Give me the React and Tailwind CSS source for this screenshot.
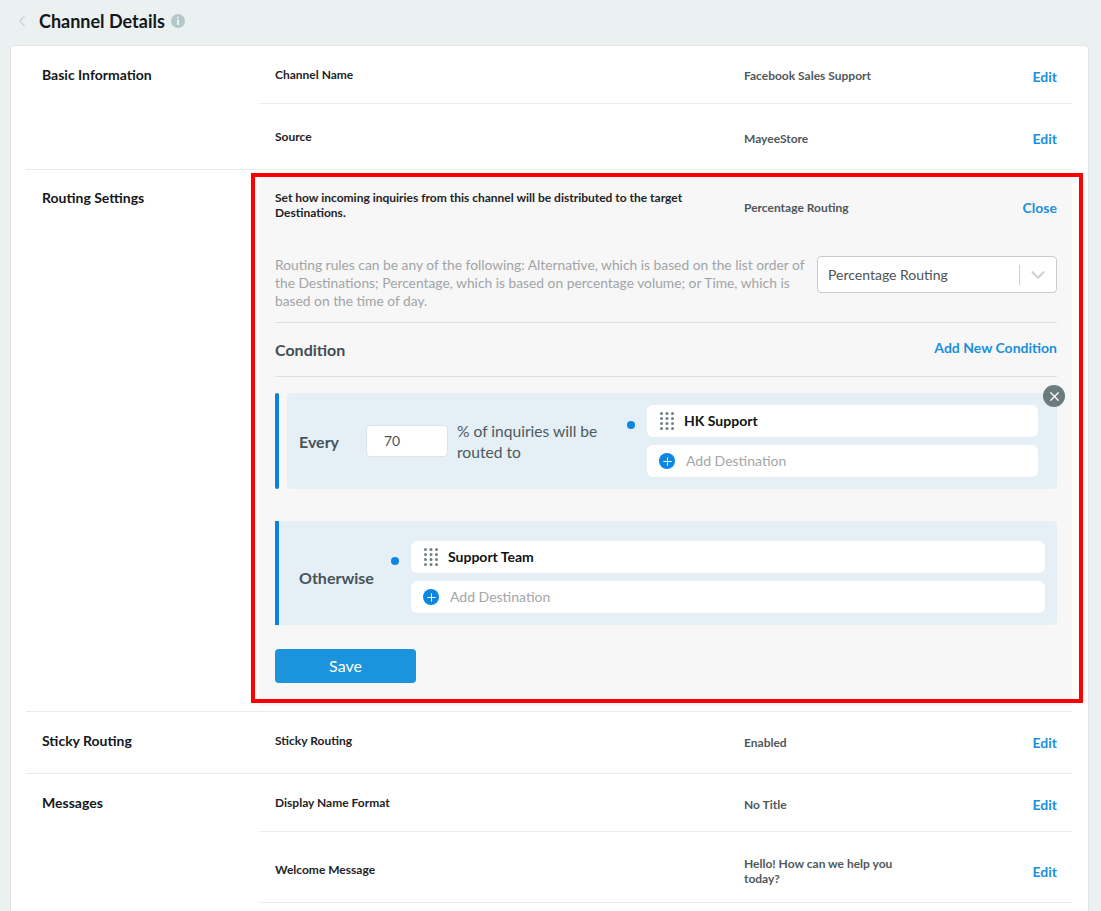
import { ChevronLeft, ChevronDown, X, Plus } from 'lucide-react';

const font = 'font-["Lato","Liberation_Sans",sans-serif]';

function Grip() {
  const dots = [];
  for (let y = 0; y < 4; y++) {
    for (let x = 0; x < 3; x++) {
      dots.push(<circle key={`${x}-${y}`} cx={1.5 + x * 5.5} cy={1.5 + y * 5} r="1.5" fill="#6f8085" />);
    }
  }
  return (
    <svg width="14" height="18" viewBox="0 0 14 18" className="shrink-0">
      {dots}
    </svg>
  );
}

function InfoBadge() {
  return (
    <svg width="14" height="14" viewBox="0 0 14 14" className="ml-[6px] shrink-0">
      <circle cx="7" cy="7" r="7" fill="#b4c7c9" />
      <rect x="6" y="2.6" width="2" height="2" rx="1" fill="#eef3f3" />
      <rect x="6" y="5.6" width="2" height="5.4" fill="#eef3f3" />
    </svg>
  );
}

function Row({ label, value, className = '', valueClass = 'pt-[2px]' }) {
  return (
    <div className={`flex pl-4 pr-[15px] ${className}`}>
      <div className="w-[469px] shrink-0 text-xs font-bold leading-4 text-[#1f2326]">{label}</div>
      <div className={`w-[170px] shrink-0 text-xs font-bold leading-[15px] text-[#50585c] ${valueClass}`}>{value}</div>
      <div className="ml-auto text-sm font-bold leading-5 text-[#1a8fdd]">Edit</div>
    </div>
  );
}

function Section({ title, children, last, titleClass = 'pt-[19px]' }) {
  return (
    <div className={`flex ${last ? '' : 'border-b border-[#e9ecec]'}`}>
      <div className={`w-[233px] shrink-0 pl-4 text-sm font-bold leading-5 text-[#14181a] ${titleClass}`}>{title}</div>
      <div className="min-w-0 flex-1">{children}</div>
    </div>
  );
}

function Destination({ name, className = '' }) {
  return (
    <div className={`flex flex-1 flex-col gap-2 ${className}`}>
      <div className="flex h-8 items-center gap-[10px] rounded-md bg-white pl-[13px]">
        <Grip />
        <span className="text-sm font-bold text-[#101314]">{name}</span>
      </div>
      <div className="flex h-8 items-center gap-[11px] rounded-md bg-white pl-3">
        <span className="flex h-4 w-4 items-center justify-center rounded-full bg-[#0b87e3]">
          <Plus size={13} strokeWidth={1.8} className="text-white" />
        </span>
        <span className="text-sm text-[#a3a6a8]">Add Destination</span>
      </div>
    </div>
  );
}

function RoutingPanel() {
  return (
    <div className="relative mt-[7px] mb-[5px] bg-[#f7f7f7] pl-4 pr-[15px] pt-[13px] pb-[23px]">
      {/* red highlight round the panel */}
      <div className="pointer-events-none absolute -left-2 -right-[11px] -top-1 bottom-[3px] border-4 border-[#ff0000]" />

      <div className="flex">
        <div className="w-[420px] shrink-0 text-xs font-bold leading-[15px] text-[#1f2326]">
          Set how incoming inquiries from this channel will be distributed to the target Destinations.
        </div>
        <div className="ml-[49px] pt-[10px] text-xs font-bold leading-4 text-[#50585c]">Percentage Routing</div>
        <div className="ml-auto pt-[8px] text-sm font-bold leading-5 text-[#1a8fdd]">Close</div>
      </div>

      <div className="mt-9 flex border-b border-[#dfe1e1] pb-3">
        <p className="w-[534px] shrink-0 text-[13.8px] leading-[18px] text-[#a1a4a6]">
          Routing rules can be any of the following: Alternative, which is based on the list order of the Destinations; Percentage, which is based on percentage volume; or Time, which is based on the time of day.
        </p>
        <div className="ml-auto flex h-[37px] w-[240px] items-center rounded border border-[#c9cbcb] bg-white pl-[10px] text-sm text-[#4c5357]">
          <span className="flex-1">Percentage Routing</span>
          <span className="h-5 w-px bg-[#cfd1d1]" />
          <ChevronDown size={22} strokeWidth={2.4} className="mx-[7px] text-[#d0d2d2]" />
        </div>
      </div>

      <div className="flex h-[54px] items-center justify-between border-b border-[#dfe1e1]">
        <span className="text-base font-bold text-[#444d52]">Condition</span>
        <span className="-mt-[4px] text-sm font-bold text-[#1a8fdd]">Add New Condition</span>
      </div>

      <div className="relative mt-4 flex h-24 gap-2">
        <div className="w-1 shrink-0 rounded-sm bg-[#0b82dc]" />
        <div className="flex flex-1 items-center rounded bg-[#e4eff6] pl-3 pr-[19px]">
          <span className="w-[67px] shrink-0 pt-[2px] text-base font-bold text-[#48545a]">Every</span>
          <div className="flex h-8 w-[82px] shrink-0 items-center rounded border border-[#dfe3e5] bg-white pl-[17px] text-sm text-[#4c5357]">70</div>
          <div className="ml-[9px] w-[165px] shrink-0 pt-[2px] text-[15.6px] leading-[21px] text-[#4c5a60]">
            % of inquiries will be routed to
          </div>
          <span className="mt-[28px] mr-3 ml-[5px] h-2 w-2 shrink-0 self-start rounded-full bg-[#0b87e3]" />
          <Destination name="HK Support" />
        </div>
        <span className="absolute -right-2 -top-2 flex h-[22px] w-[22px] items-center justify-center rounded-full bg-[#6b7b7e]">
          <X size={15} strokeWidth={2} className="text-white" />
        </span>
      </div>

      <div className="mt-8 flex h-[104px] items-center rounded-r border-l-4 border-[#0b82dc] bg-[#e4eff6] pl-5 pr-3">
        <span className="mt-[10px] w-[92px] shrink-0 text-base font-bold text-[#48545a]">Otherwise</span>
        <span className="mt-9 mr-3 h-2 w-2 shrink-0 self-start rounded-full bg-[#0b87e3]" />
        <Destination name="Support Team" className="mt-5 self-start" />
      </div>

      <button className="mt-6 block h-[34px] w-[141px] rounded bg-[#1c94dd] text-base text-white">Save</button>
    </div>
  );
}

export default function App() {
  return (
    <div className={`${font} h-[911px] overflow-hidden bg-[#ebf1f1] pl-[10px] pr-3`}>
      <div className="flex h-[45px] items-center pb-[3px]">
        <ChevronLeft size={18} strokeWidth={1.5} className="ml-[3px] text-[#c5d3d3]" />
        <h1 className="ml-[8px] text-lg font-bold text-[#14181a]">Channel Details</h1>
        <InfoBadge />
      </div>

      <div className="h-[900px] rounded border border-[#dfe4e4] bg-white pl-[15px] pr-4">
        <Section title="Basic Information">
          <Row label="Channel Name" value="Facebook Sales Support" valueClass="pt-px" className="h-[58px] items-start border-b border-[#e9ecec] pt-[21px]" />
          <Row label="Source" value="MayeeStore" className="h-[65px] pt-[25px]" />
        </Section>

        <Section title="Routing Settings" titleClass="pt-[18px]">
          <RoutingPanel />
        </Section>

        <Section title="Sticky Routing">
          <Row label="Sticky Routing" value="Enabled" className="h-[61px] pt-[21px]" />
        </Section>

        <Section title="Messages" last>
          <Row label="Display Name Format" value="No Title" className="h-[58px] border-b border-[#e9ecec] pt-[21px]" />
          <Row label="Welcome Message" value="Hello! How can we help you today?" className="h-[71px] border-b border-[#e9ecec] pt-[30px]" valueClass="-mt-[6px]" />
        </Section>
      </div>
    </div>
  );
}
